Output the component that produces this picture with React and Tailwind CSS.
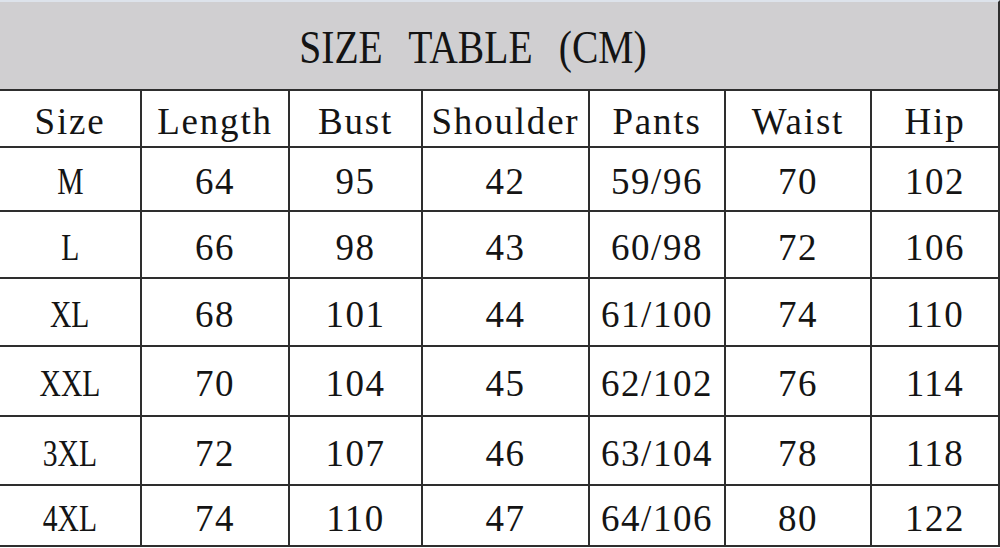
import React from "react";

const headers = ["Size", "Length", "Bust", "Shoulder", "Pants", "Waist", "Hip"];

const rows = [
  { h: "h-[64px]", cells: ["M", "64", "95", "42", "59/96", "70", "102"] },
  { h: "h-[67px]", cells: ["L", "66", "98", "43", "60/98", "72", "106"] },
  { h: "h-[68px]", cells: ["XL", "68", "101", "44", "61/100", "74", "110"] },
  { h: "h-[70px]", cells: ["XXL", "70", "104", "45", "62/102", "76", "114"] },
  { h: "h-[69px]", cells: ["3XL", "72", "107", "46", "63/104", "78", "118"] },
  { h: "h-[61px]", cells: ["4XL", "74", "110", "47", "64/106", "80", "122"] },
];

const cols = "grid grid-cols-[142px_148px_133px_167px_136px_146px_128px]";
const serif = { fontFamily: '"Liberation Serif", "DejaVu Serif", serif' };

function Text({ children, kind }) {
  let cls = "inline-block leading-none text-[#141414] text-[37px] ";
  if (kind === "size") cls += "scale-x-[0.8] tracking-[0px]";
  else if (kind === "head") cls += "tracking-[1.8px]";
  else cls += "tracking-[1.5px]";
  return (
    <span className={cls} style={serif}>
      {children}
    </span>
  );
}

function Cell({ children }) {
  return (
    <div className="flex items-center justify-center pt-[5px] border-r-2 border-b-2 border-[#2e2e2e] overflow-hidden">
      {children}
    </div>
  );
}

export default function App() {
  return (
    <div className="w-[1000px] h-[548px] bg-white overflow-hidden">
      <div className="h-[91px] border-t-2 border-t-[#dde3eb] border-b-2 border-r-2 border-[#2e2e2e] bg-[#d0cfd1] flex items-center justify-center pr-[52px] pt-[4px]">
        <span
          className="inline-block whitespace-nowrap leading-none text-[46px] scale-x-[0.86] [word-spacing:19px] text-[#141414]"
          style={serif}
        >
          SIZE TABLE (CM)
        </span>
      </div>

      <div className={cols + " h-[57px]"}>
        {headers.map((t) => (
          <Cell key={t}>
            <Text kind="head">{t}</Text>
          </Cell>
        ))}
      </div>

      {rows.map((r) => (
        <div key={r.cells[0]} className={cols + " " + r.h}>
          {r.cells.map((c, i) => (
            <Cell key={i}>
              <Text kind={i === 0 ? "size" : "num"}>{c}</Text>
            </Cell>
          ))}
        </div>
      ))}
    </div>
  );
}
